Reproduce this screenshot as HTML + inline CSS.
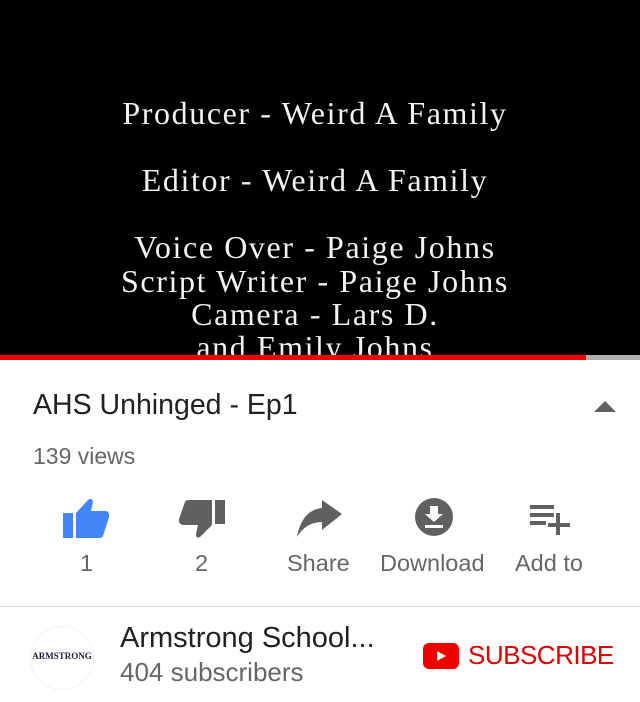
<!DOCTYPE html>
<html><head><style>
body{margin:0;width:640px;height:702px;background:#fff;font-family:"Liberation Sans",sans-serif;position:relative;overflow:hidden}
.v{position:absolute;left:0;top:0;width:640px;height:355px;background:#000;overflow:hidden}
.v div{position:absolute;left:0;width:630px;text-align:center;color:#f2f2f2;font-family:"Liberation Serif",serif;font-size:32px;letter-spacing:1.6px;line-height:34px}
.a{position:absolute}
</style></head><body>
<div class="v">
<div style="top:96px">Producer - Weird A Family</div>
<div style="top:163px">Editor - Weird A Family</div>
<div style="top:230px">Voice Over - Paige Johns</div>
<div style="top:264px">Script Writer - Paige Johns</div>
<div style="top:297px">Camera - Lars D.</div>
<div style="top:330px">and Emily Johns</div>
</div>
<div class="a" style="top:355px;left:0;width:640px;height:5px;background:#b0b0b0"></div>
<div class="a" style="top:355px;left:0;width:586px;height:5px;background:#e00"></div>
<div class="a" style="top:389px;left:33px;font-size:28.5px;color:#212121">AHS Unhinged - Ep1</div>
<svg class="a" style="top:400px;left:594px" width="22" height="14"><polygon points="0,12 11,1 22,12" fill="#606060"/></svg>
<div class="a" style="top:443px;left:33px;font-size:23px;color:#666">139 views</div>
<svg class="a" style="left:62px;top:497px" width="48" height="42" viewBox="0 0 48 42"><rect x="1" y="16" width="10" height="25" fill="#4285f4"/><path d="M14 16 L26 3 Q30 0 31 5 L29 14 L44 14 Q48 15 47 20 L41 39 Q40 41 37 41 L14 41Z" fill="#4285f4"/></svg>
<svg class="a" style="left:178px;top:497px" width="48" height="42" viewBox="0 0 48 42"><rect x="37" y="3" width="10" height="24" fill="#606060"/><path d="M34 3 L34 28 L22 40 Q18 42 18 37 L20 28 L5 28 Q0 27 1 22 L7 5 Q8 3 11 3Z" fill="#606060"/></svg>
<svg class="a" style="left:296px;top:500px" width="48" height="38" viewBox="0 0 48 38"><path d="M46 14 L26 0 L26 8 Q6 10 1 37 Q10 22 26 22 L26 30Z" fill="#606060"/></svg>
<svg class="a" style="left:414px;top:497px" width="40" height="40" viewBox="0 0 40 40"><circle cx="20" cy="20" r="19" fill="#606060"/><path d="M16 9 H24 V17 H29 L20 25 L11 17 H16Z M11 28 H29 V31 H11Z" fill="#fff"/></svg>
<svg class="a" style="left:528px;top:505px" width="44" height="30" viewBox="0 0 44 30"><path d="M2 2 H26 M2 10 H26 M2 18 H18 M30 8 V30 M20 20 H42" stroke="#606060" stroke-width="4"/></svg>
<div class="a" style="top:550px;left:0;width:640px;font-size:23.5px;color:#666">
<span class="a" style="left:80px">1</span><span class="a" style="left:195px">2</span><span class="a" style="left:287px">Share</span><span class="a" style="left:380px">Download</span><span class="a" style="left:515px">Add to</span></div>
<div class="a" style="top:606px;left:0;width:640px;height:1px;background:#ddd"></div>
<div class="a" style="top:626px;left:30px;width:62px;height:62px;border-radius:50%;background:#fff;border:1px solid #f2f2f2;font-family:'Liberation Serif',serif;font-size:9px;color:#223;text-align:center;line-height:58px;font-weight:bold">ARMSTRONG</div>
<div class="a" style="top:622px;left:120px;font-size:29px;color:#212121">Armstrong School...</div>
<div class="a" style="top:657px;left:120px;font-size:26px;color:#666">404 subscribers</div>
<svg class="a" style="left:423px;top:643px" width="36" height="26" viewBox="0 0 36 26"><rect width="36" height="26" rx="6" fill="#e00"/><polygon points="14,8 23,13 14,18" fill="#fff"/></svg>
<div class="a" style="top:640px;left:468px;font-size:26px;color:#d00;letter-spacing:-0.5px">SUBSCRIBE</div>
</body></html>
